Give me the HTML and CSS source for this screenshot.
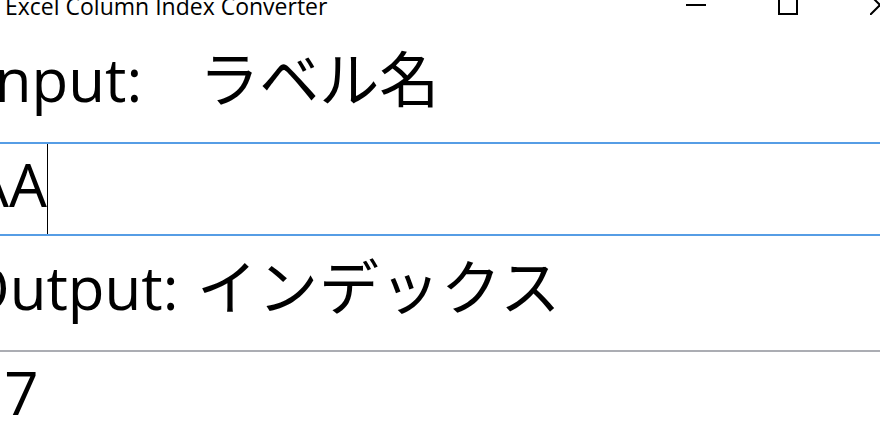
FILE: index.html
```html
<!DOCTYPE html>
<html lang="ja">
<head>
<meta charset="utf-8">
<title>Excel Column Index Converter</title>
<link rel="stylesheet" href="styles.css">
</head>
<body>
<div class="window">
  <header class="titlebar">
    <span class="title">Excel Column Index Converter</span>
    <div class="caption">
      <span class="cbtn"><svg class="ico" viewBox="0 0 20 20" width="20" height="20"><path d="M0 10H20" stroke="#000" stroke-width="2" fill="none"/></svg></span>
      <span class="cbtn"><svg class="ico" viewBox="0 0 20 20" width="20" height="20"><rect x="1" y="1" width="18" height="18" stroke="#000" stroke-width="2" fill="none"/></svg></span>
      <span class="cbtn"><svg class="ico" viewBox="0 0 20 20" width="20" height="20"><path d="M0 0L20 20M20 0L0 20" stroke="#000" stroke-width="2" fill="none"/></svg></span>
    </div>
  </header>
  <main class="content">
    <div class="label label-in"><span class="key">Input:</span><span class="val val-in">ラベル名</span></div>
    <div class="box box-in"><span class="txt">AA</span><span class="caret"></span></div>
    <div class="label label-out"><span class="key">Output:</span> <span class="val val-out">インデックス</span></div>
    <div class="box box-out"><span class="txt txt-out">27</span></div>
  </main>
</div>
</body>
</html>
```
FILE: styles.css
```css
html, body {
  margin: 0;
  padding: 0;
}
body {
  width: 880px;
  height: 440px;
  overflow: hidden;
  background: #fff;
  color: #000;
  font-family: "Open Sans", "Noto Sans CJK JP", sans-serif;
}
.window {
  width: 880px;
}
.titlebar {
  display: flex;
  justify-content: space-between;
  align-items: flex-start;
  margin-top: -10px;
  height: 38px;
}
.title {
  font-size: 23px;
  line-height: 12px;
  margin-top: 10px;
  padding-left: 5px;
  white-space: nowrap;
}
.caption {
  display: flex;
  margin-right: -46px;
}
.cbtn {
  width: 92px;
  height: 30px;
  display: flex;
  align-items: center;
  justify-content: center;
}
.ico {
  display: block;
}
.content {
  font-size: 60px;
}
.label {
  height: 114px;
  line-height: 103px;
  white-space: nowrap;
}
.label-in {
  margin-left: -22px;
}
.val-in {
  margin-left: 57px;
}
.label-out {
  margin-left: -37px;
}
.val-out {
  margin-left: 3px;
  letter-spacing: 1px;
}
.box {
  height: 90px;
  display: flex;
  align-items: stretch;
  margin: 0 -40px;
  padding-left: 9px;
  border: 2px solid #569de5;
}
.box-out {
  border-color: #abadb3;
}
.txt {
  line-height: 80px;
  white-space: nowrap;
}
.txt-out {
  margin-left: -4px;
  letter-spacing: 3px;
}
.caret {
  width: 1px;
  background: #000;
}
```
